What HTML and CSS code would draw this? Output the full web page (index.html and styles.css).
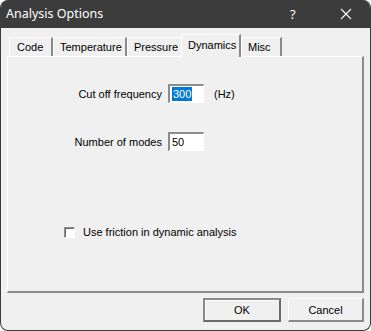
FILE: index.html
```html
<!DOCTYPE html>
<html>
<head>
<meta charset="utf-8">
<link rel="stylesheet" href="styles.css">
</head>
<body>
<div class="window">
  <div class="titlebar">
    <span class="title">Analysis Options</span>
    <span class="help">?</span>
    <span class="close">
      <svg width="12" height="12" viewBox="0 0 12 12"><path d="M1 1L11 11M11 1L1 11" stroke="#fff" stroke-width="1.1" fill="none"/></svg>
    </span>
  </div>
  <div class="content">
    <div class="tabs">
      <div class="tab">Code</div>
      <div class="tab">Temperature</div>
      <div class="tab">Pressure</div>
      <div class="tab active">Dynamics</div>
      <div class="tab">Misc</div>
    </div>
    <div class="panel">
      <div class="row row1">
        <span class="label">Cut off frequency</span>
        <span class="field"><span class="sel">300</span></span>
        <span class="unit">(Hz)</span>
      </div>
      <div class="row row2">
        <span class="label">Number of modes</span>
        <span class="field">50</span>
      </div>
      <div class="check">
        <span class="box"></span>
        <span>Use friction in dynamic analysis</span>
      </div>
    </div>
    <div class="buttons">
      <div class="btn default">OK</div>
      <div class="btn">Cancel</div>
    </div>
  </div>
</div>
</body>
</html>
```
FILE: styles.css
```css
html, body {
  margin: 0;
  padding: 0;
  background: #ffffff;
}
.window {
  width: 371px;
  height: 331px;
  box-sizing: border-box;
  border-radius: 8px;
  overflow: hidden;
  background: #f0f0f0;
  border: 1px solid #3c3c3c;
  border-top: none;
  display: flex;
  flex-direction: column;
  font-family: "Liberation Sans", Arial, sans-serif;
  font-size: 11px;
  color: #000;
}
.titlebar {
  height: 28px;
  flex: none;
  background: #3c3c3c;
  color: #fff;
  display: flex;
  align-items: center;
  font-family: "Noto Sans", "Open Sans", sans-serif;
  font-size: 12.5px;
  padding-left: 5px;
}
.title {
  flex: 1;
  padding-bottom: 1px;
}
.help {
  width: 14px;
  margin-right: 36px;
  font-size: 13px;
}
.close {
  width: 12px;
  margin-right: 18px;
  display: flex;
}
.content {
  flex: 1;
  display: flex;
  flex-direction: column;
  padding: 5px 5px 0 6px;
}
.tabs {
  display: flex;
  height: 23px;
  align-items: flex-end;
  padding-left: 2px;
}
.tab {
  height: 19px;
  box-sizing: border-box;
  padding: 0 6px 0 6px;
  display: flex;
  align-items: center;
  border-top: 1px solid #fff;
  border-left: 1px solid #fff;
  border-right: 2px solid #8a8a8a;
}
.tab:nth-child(1) { width: 44px; padding-left: 7px; }
.tab:nth-child(2) { width: 74px; }
.tab:nth-child(3) { width: 56px; }
.tab:nth-child(5) { width: 41px; }
.tab.active {
  height: 23px;
  width: 60px;
  margin-left: -2px;
  padding-left: 6px;
  padding-bottom: 3px;
  position: relative;
  z-index: 1;
  margin-bottom: -1px;
  background: #f0f0f0;
}
.panel {
  height: 237px;
  box-sizing: border-box;
  border-top: 1px solid #fff;
  border-left: 1px solid #fff;
  border-right: 2px solid #8a8a8a;
  border-bottom: 2px solid #8a8a8a;
  display: flex;
  flex-direction: column;
  margin-right: 1px;
}
.row {
  display: flex;
  align-items: center;
  height: 19px;
}
.row1 { margin-top: 27px; }
.row2 { margin-top: 29px; }
.label {
  width: 160px;
  text-align: right;
  padding-right: 6px;
  box-sizing: border-box;
}
.field {
  width: 36px;
  height: 19px;
  box-sizing: border-box;
  background: #fff;
  border-top: 2px solid #8c8c8c;
  border-left: 2px solid #8c8c8c;
  border-right: 1px solid #fff;
  border-bottom: 1px solid #fff;
  display: flex;
  align-items: center;
  padding-left: 2px;
}
.sel {
  background: #0078d7;
  color: #fff;
  padding: 1px 1px;
}
.unit {
  margin-left: 10px;
}
.check {
  display: flex;
  align-items: center;
  margin-top: 75px;
  margin-left: 56px;
}
.box {
  width: 11px;
  height: 11px;
  box-sizing: border-box;
  background: #fff;
  border-top: 1px solid #8c8c8c;
  border-left: 1px solid #8c8c8c;
  border-right: 1px solid #fff;
  border-bottom: 1px solid #fff;
  box-shadow: inset 1px 1px 0 #696969;
  margin-right: 8px;
}
.buttons {
  display: flex;
  justify-content: flex-end;
  gap: 7px;
  margin-top: 5px;
  padding-right: 1px;
}
.btn {
  width: 76px;
  height: 24px;
  box-sizing: border-box;
  display: flex;
  align-items: center;
  justify-content: center;
  border-top: 1px solid #fff;
  border-left: 1px solid #fff;
  border-right: 2px solid #8a8a8a;
  border-bottom: 2px solid #8a8a8a;
}
.btn.default {
  width: 78px;
  border: 2px solid #6a6a6a;
  border-top-color: #8a8a8a;
  border-left-color: #8a8a8a;
  box-shadow: inset 1px 1px 0 #fff;
}
```
